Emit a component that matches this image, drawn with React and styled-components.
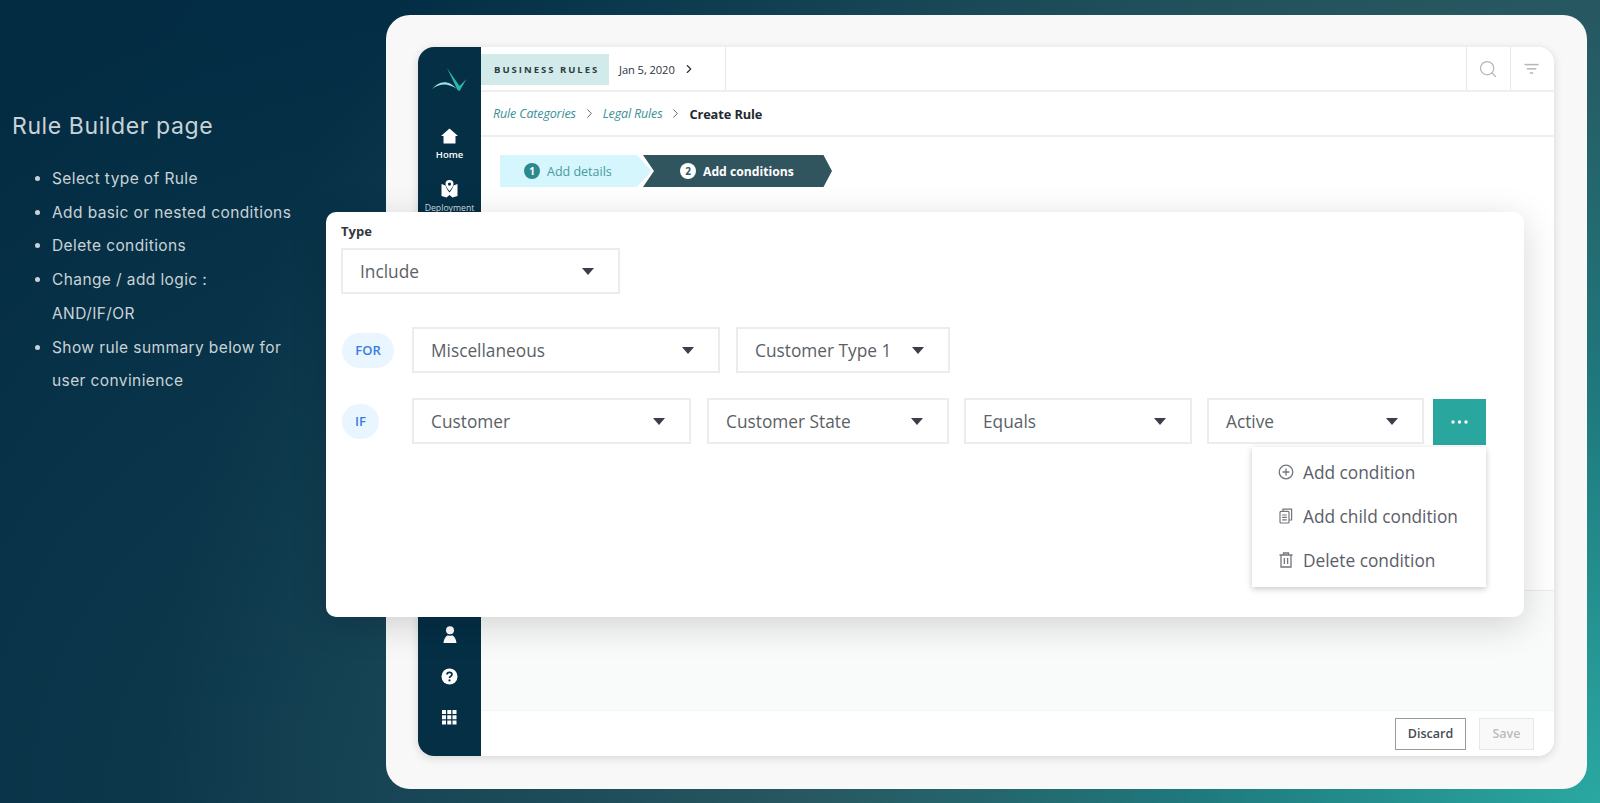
import React from 'react';
import styled, { createGlobalStyle } from 'styled-components';
import { ChevronRight, Search } from 'lucide-react';

const GlobalStyle = createGlobalStyle`
  html, body {
    margin: 0;
    padding: 0;
    height: 100%;
  }
  * {
    box-sizing: border-box;
  }
`;

const Page = styled.div`
  position: relative;
  display: flex;
  width: 1600px;
  height: 803px;
  overflow: hidden;
  background:
    radial-gradient(circle 800px at 25% 100%, rgba(45, 90, 100, 0.32), rgba(45, 90, 100, 0) 100%),
    radial-gradient(circle 1800px at 100% 100%, #2aa8a1 0%, #1f7a7e 22%, #27565f 45%, #0f3d50 66%, #032d44 80%, #032c43 100%);
`;

const Intro = styled.section`
  width: 386px;
  flex-shrink: 0;
  padding: 111px 0 0 12px;
  font-family: Inter, 'Liberation Sans', sans-serif;
  color: #c9d3d7;
`;

const IntroTitle = styled.h1`
  margin: 0;
  font-size: 23px;
  line-height: 30px;
  font-weight: 400;
  letter-spacing: 0.6px;
`;

const IntroList = styled.ul`
  margin: 21px 0 0;
  padding: 0 0 0 40px;
  width: 300px;
  font-size: 15.5px;
  line-height: 33.7px;
  letter-spacing: 0.4px;
`;

const Frame = styled.div`
  width: 1201px;
  height: 774px;
  margin-top: 15px;
  padding: 32px 33px 33px 32px;
  background: #f8f8f8;
  border-radius: 24px;
`;

const AppShell = styled.div`
  display: flex;
  height: 100%;
  border-radius: 16px;
  overflow: hidden;
  background: #fff;
  box-shadow: 0 2px 10px rgba(0, 0, 0, 0.14);
  font-family: 'Open Sans', 'Liberation Sans', sans-serif;
`;

const Sidebar = styled.nav`
  width: 63px;
  flex-shrink: 0;
  display: flex;
  flex-direction: column;
  justify-content: space-between;
  align-items: center;
  padding: 19px 0 31px;
  background: #042f45;
  color: #fff;
`;

const SideGroup = styled.div`
  display: flex;
  flex-direction: column;
  align-items: center;
  gap: ${p => p.$gap || 0}px;
`;

const LogoBox = styled.div`
  height: 27px;
  margin-bottom: 35px;
`;

const SideItem = styled.a`
  display: flex;
  flex-direction: column;
  align-items: center;
  margin-bottom: 18px;
  font-size: ${p => p.$dim ? 8.7 : 9.5}px;
  line-height: 14px;
  font-weight: ${p => p.$dim ? 500 : 600};
  color: ${p => p.$dim ? '#d5dde1' : '#fff'};
  svg {
    display: block;
    margin-bottom: ${p => p.$dim ? 3 : 4}px;
  }
`;

const Main = styled.div`
  flex: 1;
  min-width: 0;
  display: flex;
  flex-direction: column;
`;

const TopBar = styled.header`
  display: flex;
  align-items: stretch;
  height: 45px;
  border-bottom: 2px solid #efefef;
  background: #fff;
`;

const TopLeft = styled.div`
  width: 245px;
  display: flex;
  align-items: center;
  border-right: 1px solid #e8e8e8;
`;

const ModuleTag = styled.div`
  width: 128px;
  height: 31px;
  margin-top: 1px;
  display: flex;
  align-items: center;
  padding-left: 13px;
  background: #d3eaea;
  color: #2d3a42;
  font-size: 9.5px;
  font-weight: 700;
  letter-spacing: 2px;
  white-space: nowrap;
`;

const DateLabel = styled.span`
  display: flex;
  align-items: center;
  margin: 1px 0 0 10px;
  gap: 7px;
  font-size: 11.2px;
  font-weight: 500;
  color: #2d3340;
  letter-spacing: -0.1px;
`;

const TopSpacer = styled.div`
  flex: 1;
`;

const TopIcon = styled.div`
  width: ${p => p.$w}px;
  display: flex;
  align-items: center;
  justify-content: center;
  padding-right: 2px;
  border-left: 1px solid #e8e8e8;
`;

const Crumbs = styled.div`
  height: 45px;
  display: flex;
  align-items: center;
  padding-left: 12px;
  border-bottom: 2px solid #efefef;
  background: #fff;
  font-size: 12.5px;
`;

const CrumbLink = styled.a`
  color: #3b8f95;
  font-style: italic;
  letter-spacing: -0.15px;
`;

const CrumbSep = styled.span`
  display: flex;
  width: 27px;
  justify-content: center;
  color: #555c62;
`;

const CrumbCurrent = styled.span`
  font-weight: 700;
  font-size: 12.8px;
  color: #25292f;
  letter-spacing: -0.1px;
`;

const Content = styled.div`
  flex: 1;
  padding: 18px 0 0 19px;
  background: #fff;
`;

const Stepper = styled.ol`
  display: flex;
  margin: 0;
  padding: 0;
  list-style: none;
`;

const Step = styled.li`
  width: ${p => p.$active ? 189 : 152}px;
  height: 32px;
  margin-left: ${p => p.$active ? -9 : 0}px;
  display: flex;
  align-items: center;
  padding-left: ${p => p.$active ? 37 : 24}px;
  gap: 7px;
  font-size: ${p => p.$active ? 12.2 : 12.5}px;
  font-weight: ${p => p.$active ? 700 : 400};
  color: ${p => p.$active ? '#fff' : '#4a9aa0'};
  background: ${p => p.$active ? '#31555f' : '#d4f6fc'};
  clip-path: ${p => p.$active
    ? 'polygon(0 0, 95.5% 0, 100% 50%, 95.5% 100%, 0 100%, 5.8% 50%)'
    : 'polygon(0 0, 90% 0, 100% 50%, 90% 100%, 0 100%)'};
`;

const StepNum = styled.span`
  width: 16px;
  height: 16px;
  border-radius: 50%;
  display: flex;
  align-items: center;
  justify-content: center;
  font-size: 10px;
  font-weight: 700;
  color: ${p => p.$active ? '#31555f' : '#fff'};
  background: ${p => p.$active ? '#fff' : '#2b8a8e'};
`;

const Summary = styled.div`
  height: 120px;
  background: #f9fafa;
  border-top: 1px solid #ececec;
`;

const Footer = styled.footer`
  height: 46px;
  display: flex;
  justify-content: flex-end;
  align-items: center;
  gap: 13px;
  padding-right: 20px;
  background: #fff;
  border-top: 1px solid #f1f4f4;
`;

const Button = styled.button`
  height: 32px;
  width: ${p => p.$w}px;
  padding: 0;
  font-family: inherit;
  font-size: 12.5px;
  font-weight: 600;
  border: 1px solid ${p => p.disabled ? '#e8e8e8' : '#9a9a9a'};
  background: ${p => p.disabled ? '#f9f9f9' : '#fff'};
  color: ${p => p.disabled ? '#b9bcbe' : '#464b52'};
`;

const Modal = styled.section`
  position: absolute;
  left: 326px;
  top: 212px;
  width: 1198px;
  height: 405px;
  padding: 10px 15px;
  background: #fff;
  border-radius: 10px;
  box-shadow: 0 8px 36px rgba(0, 0, 0, 0.16);
  font-family: 'Open Sans', 'Liberation Sans', sans-serif;
`;

const FieldLabel = styled.label`
  display: block;
  height: 26px;
  font-size: 13px;
  line-height: 18px;
  font-weight: 700;
  color: #33373d;
`;

const Row = styled.div`
  display: flex;
  align-items: flex-start;
  margin-top: ${p => p.$top}px;
`;

const LogicSlot = styled.div`
  width: 71px;
  height: 46px;
  padding-left: 1px;
  display: flex;
  align-items: center;
`;

const LogicPill = styled.span`
  width: ${p => p.$w}px;
  height: 35px;
  border-radius: 18px;
  display: flex;
  align-items: center;
  justify-content: center;
  background: #e9f6ff;
  color: #3a7be0;
  font-size: 13px;
  font-weight: 600;
`;

const SelectBox = styled.div`
  width: ${p => p.$w}px;
  height: 46px;
  margin-right: ${p => p.$gap || 0}px;
  flex-shrink: 0;
  display: flex;
  align-items: center;
  justify-content: space-between;
  padding: 0 24px 0 17px;
  border: 2px solid #ececec;
  background: #fff;
  font-size: 17.3px;
  color: #5b5f66;
  white-space: nowrap;
`;

const Caret = styled.span`
  width: 0;
  height: 0;
  border-left: 6.5px solid transparent;
  border-right: 6.5px solid transparent;
  border-top: 7px solid #3b3d49;
`;

const MoreButton = styled.button`
  width: 53px;
  height: 46px;
  margin: 1px 0 0 9px;
  padding: 0;
  border: 0;
  display: flex;
  align-items: center;
  justify-content: center;
  background: #29a79e;
`;

const Menu = styled.ul`
  position: absolute;
  right: 38px;
  top: 235px;
  width: 234px;
  height: 140px;
  margin: 0;
  padding: 3px 0 0 26px;
  list-style: none;
  background: #fff;
  box-shadow: 0 2px 6px rgba(0, 0, 0, 0.22);
`;

const MenuItem = styled.li`
  height: 44px;
  display: flex;
  align-items: center;
  gap: 9px;
  font-size: 17.3px;
  color: #5a5e68;
  white-space: nowrap;
`;

const Logo = () => (
  <svg width="38" height="27" viewBox="0 0 38 27">
    <path d="M1 23 C7 16 16 12 26 23 C17 17 9 17 1 23 Z" fill="#9be6e6" />
    <path d="M16 2 L28.5 20 L35.5 13 L28.5 25 L26.5 24 Z" fill="#2ab5b0" />
  </svg>
);

const HomeIcon = () => (
  <svg width="17" height="16" viewBox="0 0 17 16" fill="#fff">
    <path d="M8.5 0.5 L17 8 H14.5 V15.5 H2.5 V8 H0 Z" />
  </svg>
);

const DeployIcon = () => (
  <svg width="17" height="18" viewBox="0 0 17 18" fill="#fff">
    <path d="M0.5 4 L4.5 5.5 C5 8 7 10.5 8.5 12.5 C10 10.5 12 8 12.5 5.5 L16.5 4 V16 L11.5 17.5 L8.5 15 L5.5 17.5 L0.5 16 Z" />
    <path fillRule="evenodd" d="M8.5 0 A4 4 0 0 1 12.5 4 C12.5 6.5 10 9 8.5 11 C7 9 4.5 6.5 4.5 4 A4 4 0 0 1 8.5 0 Z M8.5 2.5 A1.6 1.6 0 1 0 8.5 5.7 A1.6 1.6 0 1 0 8.5 2.5 Z" />
  </svg>
);

const UserIcon = () => (
  <svg width="14" height="17" viewBox="0 0 14 17" fill="#fff">
    <circle cx="7" cy="4.2" r="4" />
    <path d="M0.5 17 C1 12 3.5 9.5 5 9.2 C6 10 8 10 9 9.2 C10.5 9.5 13 12 13.5 17 Z" />
  </svg>
);

const HelpIcon = () => (
  <svg width="17" height="17" viewBox="0 0 17 17">
    <circle cx="8.5" cy="8.5" r="8" fill="#fff" />
    <path d="M6 6.6 C6 3.6 11 3.6 11 6.6 C11 8.4 8.5 8.2 8.5 10" fill="none" stroke="#042f45" strokeWidth="1.7" />
    <circle cx="8.5" cy="12.4" r="1.1" fill="#042f45" />
  </svg>
);

const GridIcon = () => (
  <svg width="15" height="15" viewBox="0 0 15 15" fill="#fff">
    {[0, 5.25, 10.5].map(y =>
      [0, 5.25, 10.5].map(x => <rect key={`${x}-${y}`} x={x} y={y} width="4" height="4" />)
    )}
  </svg>
);

const FilterIcon = () => (
  <svg width="15" height="12" viewBox="0 0 16 12" fill="#b4b6b8">
    <rect x="0.5" y="0.5" width="15" height="1.6" />
    <rect x="3" y="5" width="10" height="1.6" />
    <rect x="6.2" y="9.4" width="3.6" height="1.6" />
  </svg>
);

const Dots = () => (
  <svg width="17" height="4" viewBox="0 0 17 4" fill="#fff">
    <circle cx="2" cy="2" r="1.7" />
    <circle cx="8.5" cy="2" r="1.7" />
    <circle cx="15" cy="2" r="1.7" />
  </svg>
);

const PlusCircleIcon = () => (
  <svg width="16" height="16" viewBox="0 0 16 16" fill="none" stroke="#73767c" strokeWidth="1.3">
    <circle cx="8" cy="8" r="6.8" />
    <path d="M8 4.6 V11.4 M4.6 8 H11.4" />
  </svg>
);

const CopyIcon = () => (
  <svg width="16" height="16" viewBox="0 0 16 16" fill="none" stroke="#73767c" strokeWidth="1.2">
    <rect x="2" y="3.4" width="9" height="11.6" rx="1" />
    <path d="M5 3.2 V1.2 H13.6 V12 H11.2" />
    <path d="M4.2 7 H8.8 M4.2 9.4 H8.8 M4.2 11.8 H8.8" />
  </svg>
);

const TrashIcon = () => (
  <svg width="16" height="16" viewBox="0 0 16 16" fill="none" stroke="#73767c" strokeWidth="1.3">
    <path d="M1.5 3 H14.5 M5.5 3 V1 H10.5 V3" />
    <path d="M3 3 V15 H13 V3" />
    <path d="M6.4 6 V12 M9.6 6 V12" />
  </svg>
);

const Select = ({ value, w, gap }) => (
  <SelectBox $w={w} $gap={gap}>
    {value}
    <Caret />
  </SelectBox>
);

export default function App() {
  return (
    <Page>
      <GlobalStyle />
      <Intro>
        <IntroTitle>Rule Builder page</IntroTitle>
        <IntroList>
          <li>Select type of Rule</li>
          <li>Add basic or nested conditions</li>
          <li>Delete conditions</li>
          <li>Change / add logic :<br />AND/IF/OR</li>
          <li>Show rule summary below for user convinience</li>
        </IntroList>
      </Intro>

      <Frame>
        <AppShell>
          <Sidebar>
            <SideGroup>
              <LogoBox><Logo /></LogoBox>
              <SideItem><HomeIcon />Home</SideItem>
              <SideItem $dim><DeployIcon />Deployment</SideItem>
            </SideGroup>
            <SideGroup $gap={25}>
              <UserIcon />
              <HelpIcon />
              <GridIcon />
            </SideGroup>
          </Sidebar>

          <Main>
            <TopBar>
              <TopLeft>
                <ModuleTag>BUSINESS RULES</ModuleTag>
                <DateLabel>Jan 5, 2020 <ChevronRight size={14} strokeWidth={2} /></DateLabel>
              </TopLeft>
              <TopSpacer />
              <TopIcon $w={44}><Search size={20} color="#b4b6b8" strokeWidth={1.5} /></TopIcon>
              <TopIcon $w={44}><FilterIcon /></TopIcon>
            </TopBar>
            <Crumbs>
              <CrumbLink>Rule Categories</CrumbLink>
              <CrumbSep><ChevronRight size={15} strokeWidth={1.5} /></CrumbSep>
              <CrumbLink>Legal Rules</CrumbLink>
              <CrumbSep><ChevronRight size={15} strokeWidth={1.5} /></CrumbSep>
              <CrumbCurrent>Create Rule</CrumbCurrent>
            </Crumbs>
            <Content>
              <Stepper>
                <Step><StepNum>1</StepNum>Add details</Step>
                <Step $active><StepNum $active>2</StepNum>Add conditions</Step>
              </Stepper>
            </Content>
            <Summary />
            <Footer>
              <Button $w={71}>Discard</Button>
              <Button $w={55} disabled>Save</Button>
            </Footer>
          </Main>
        </AppShell>
      </Frame>

      <Modal>
        <FieldLabel>Type</FieldLabel>
        <Select value="Include" w={279} />
        <Row $top={33}>
          <LogicSlot><LogicPill $w={52}>FOR</LogicPill></LogicSlot>
          <Select value="Miscellaneous" w={308} gap={16} />
          <Select value="Customer Type 1" w={214} />
        </Row>
        <Row $top={25}>
          <LogicSlot><LogicPill $w={37}>IF</LogicPill></LogicSlot>
          <Select value="Customer" w={279} gap={16} />
          <Select value="Customer State" w={242} gap={15} />
          <Select value="Equals" w={228} gap={15} />
          <Select value="Active" w={217} />
          <MoreButton><Dots /></MoreButton>
        </Row>
        <Menu>
          <MenuItem><PlusCircleIcon />Add condition</MenuItem>
          <MenuItem><CopyIcon />Add child condition</MenuItem>
          <MenuItem><TrashIcon />Delete condition</MenuItem>
        </Menu>
      </Modal>
    </Page>
  );
}
